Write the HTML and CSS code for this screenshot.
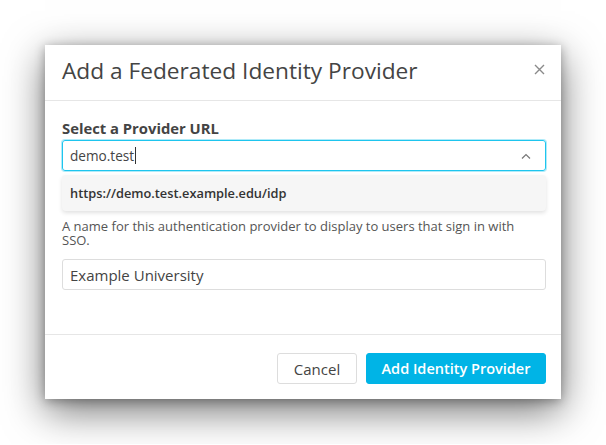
FILE: index.html
```html
<!DOCTYPE html>
<html>
<head>
<meta charset="utf-8">
<link rel="stylesheet" href="styles.css">
</head>
<body>
<div class="modal">
  <div class="modal-header">
    <h1 class="modal-title">Add a Federated Identity Provider</h1>
    <button class="close" aria-label="Close">
      <svg width="11" height="11" viewBox="0 0 11 11"><path d="M1 1L10 10M10 1L1 10" stroke="#8a8a8a" stroke-width="1.4" fill="none"/></svg>
    </button>
  </div>
  <div class="modal-body">
    <label class="field-label">Select a Provider URL</label>
    <div class="select-wrap">
      <div class="select-input focused"><span class="value">demo.test</span><span class="caret"></span>
        <svg class="chevron" width="10" height="6" viewBox="0 0 10 6"><path d="M1 5.5L5 1.5L9 5.5" stroke="#777" stroke-width="1.2" fill="none"/></svg>
      </div>
      <div class="menu">
        <div class="option">https://demo.test.example.edu/idp</div>
      </div>
    </div>
    <p class="help">A name for this authentication provider to display to users that sign in with SSO.</p>
    <div class="text-input">Example University</div>
  </div>
  <div class="modal-footer">
    <button class="btn btn-default">Cancel</button>
    <button class="btn btn-primary">Add Identity Provider</button>
  </div>
</div>
</body>
</html>
```
FILE: styles.css
```css
html, body {
  margin: 0;
  padding: 0;
  background: #ffffff;
}
body {
  padding: 45px;
  font-family: "Open Sans", "Lato", sans-serif;
  color: #444;
}
.modal {
  width: 516px;
  height: 354px;
  background: #fff;
  box-shadow: 0 12px 38px rgba(0,0,0,0.55), 0 2px 10px rgba(0,0,0,0.3);
  display: flex;
  flex-direction: column;
}
.modal-header {
  height: 56px;
  box-sizing: border-box;
  border-bottom: 1px solid #e6e6e6;
  display: flex;
  align-items: center;
  justify-content: space-between;
  padding: 0 16px 3px 17px;
}
.modal-title {
  margin: 0;
  font-size: 22.7px;
  line-height: 26px;
  font-weight: 400;
  color: #444;
}
.close {
  border: 0;
  background: none;
  padding: 0;
  width: 11px;
  height: 11px;
  display: flex;
  margin-top: -4px;
}
.modal-body {
  flex: 1;
  padding: 18px 15px 0 17px;
}
.field-label {
  display: block;
  font-size: 14.8px;
  font-weight: 700;
  color: #444;
  line-height: 18px;
  margin-bottom: 3px;
}
.select-wrap {
  position: relative;
}
.select-input {
  height: 31px;
  box-sizing: border-box;
  border: 1px solid #1ec5ee;
  box-shadow: 0 0 0 1px rgba(30,197,238,0.35);
  border-radius: 3px;
  display: flex;
  align-items: center;
  padding: 0 7px;
  font-size: 13.6px;
  color: #444;
}
.caret {
  display: inline-block;
  width: 1px;
  height: 17px;
  background: #333;
  margin-left: 1px;
}
.chevron {
  margin-left: auto;
  margin-right: 7px;
}
.menu {
  margin-top: 4px;
  height: 36px;
  background: #f6f6f6;
  border-radius: 4px;
  box-shadow: 0 2px 4px rgba(0,0,0,0.12);
  display: flex;
  align-items: center;
  padding: 0 8px;
}
.option {
  font-size: 12.8px;
  font-weight: 600;
  color: #333;
}
.help {
  margin: 8px 0 0;
  max-width: 470px;
  font-size: 13px;
  line-height: 14px;
  color: #555;
}
.text-input {
  margin-top: 12px;
  height: 31px;
  box-sizing: border-box;
  border: 1px solid #ddd;
  border-radius: 3px;
  display: flex;
  align-items: center;
  padding: 0 7px;
  font-size: 15px;
  color: #444;
}
.modal-footer {
  height: 65px;
  box-sizing: border-box;
  border-top: 1px solid #e6e6e6;
  display: flex;
  justify-content: flex-end;
  align-items: flex-start;
  gap: 9px;
  padding: 18px 15px 0 0;
}
.btn {
  height: 31px;
  border-radius: 3px;
  font-family: inherit;
  font-size: 15px;
  padding: 0 10px;
  cursor: pointer;
}
.btn-default {
  width: 80px;
  background: #fff;
  border: 1px solid #ddd;
  color: #444;
}
.btn-primary {
  width: 180px;
  background: #00b4e6;
  border: 1px solid #00b4e6;
  color: #fff;
  font-weight: 600;
  font-size: 14.5px;
}
```
